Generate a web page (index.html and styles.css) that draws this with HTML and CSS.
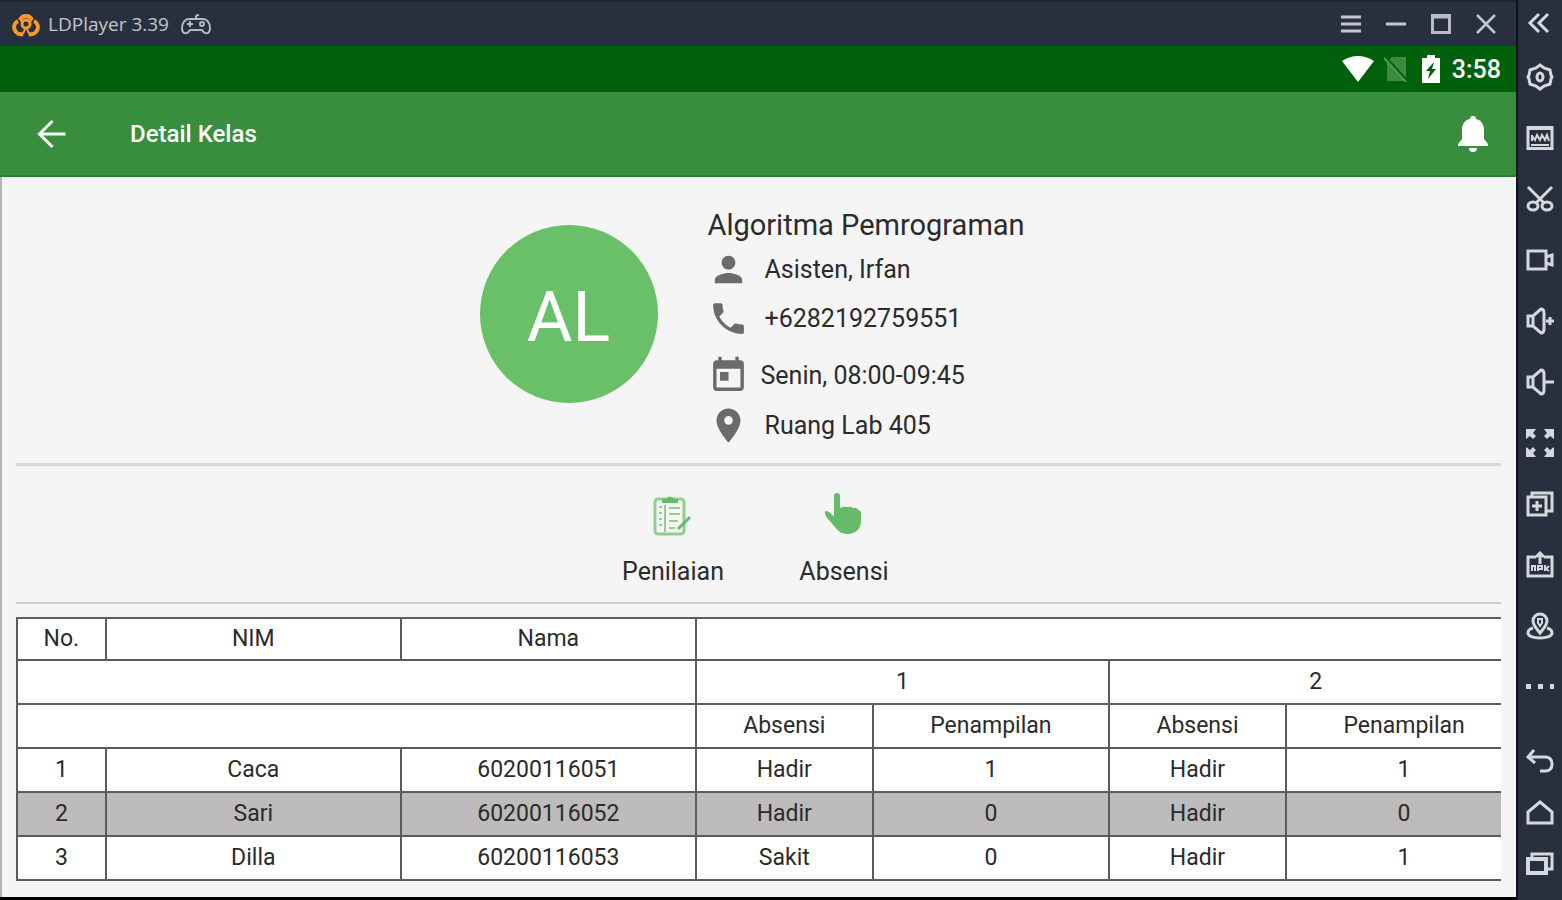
FILE: index.html
```html
<!DOCTYPE html>
<html lang="id">

<head>
    <meta charset="UTF-8">
    <meta name="viewport" content="width=device-width, initial-scale=1.0">
    <title>Detail Kelas</title>
    <link rel="stylesheet" href="styles.css">
</head>

<body>
    <div class="emulator">
        <div class="layar">
            <header class="titlebar">
                <svg class="logo" viewBox="0 0 28 28" fill="none" stroke="#f79a2a" stroke-width="4">
                    <path d="M8 10a6.500 6.500 0 0 1 12 0" />
                    <path d="M6 11a7 7 0 0 0 5 13" />
                    <path d="M22 11a7 7 0 0 1-5 13" />
                    <circle cx="14" cy="14" r="4" stroke-width="3" />
                    <path d="M8 10l3 2M20 10l-3 2M11 24l2-5M17 24l-2-5" stroke-width="2" />
                </svg>
                <span class="nama-app">LDPlayer 3.39</span>
                <svg class="gamepad" viewBox="0 0 30 22" fill="none" stroke="#b4b8c0" stroke-width="2">
                    <path d="M15 6V4q0-2 3-2M8 6h14c4 0 7 4 7 9 0 6-5 7-8 2H9c-3 5-8 4-8-2 0-5 3-9 7-9z" />
                    <path d="M6 11h6M9 8v6" />
                    <circle cx="21" cy="11" r="2" />
                </svg>
                <div class="kontrol">
                    <button type="button" aria-label="Menu">
                        <svg viewBox="0 0 20 20" stroke="#c3c6cc" stroke-width="3"><path d="M0 3h20M0 10h20M0 17h20" /></svg>
                    </button>
                    <button type="button" aria-label="Minimize">
                        <svg viewBox="0 0 20 20" stroke="#c3c6cc" stroke-width="3"><path d="M0 10h20" /></svg>
                    </button>
                    <button type="button" aria-label="Maximize">
                        <svg viewBox="0 0 20 20" fill="none" stroke="#b9bcc3" stroke-width="3"><rect x="1.500" y="1.500" width="17" height="17" /><path d="M2 3h16" /></svg>
                    </button>
                    <button type="button" aria-label="Close">
                        <svg viewBox="0 0 20 20" stroke="#c3c6cc" stroke-width="2.500"><path d="M1 1l18 18M19 1L1 19" /></svg>
                    </button>
                </div>
            </header>

            <main class="android">
                <div class="statusbar">
                    <svg class="wifi" viewBox="0 0 32 26" fill="#fff"><path d="M0 5Q16-5 32 5L16 26z" /></svg>
                    <svg class="sim" viewBox="0 0 24 26">
                        <path fill="#3d8a42" d="M8 1h14v24H3V6z" />
                        <path stroke="#00600b" stroke-width="3" d="M2 2l22 24" />
                        <path stroke="#4f9853" stroke-width="2" d="M0 2l22 24" />
                    </svg>
                    <svg class="baterai" viewBox="0 0 18 28">
                        <path fill="#fff" d="M5 0h8v3h5v25H0V3h5z" />
                        <path fill="#00600b" d="M12 7L4 16h4l-2 8 8-10h-4z" />
                    </svg>
                    <span>3:58</span>
                </div>

                <div class="appbar">
                    <button type="button" aria-label="Kembali">
                        <svg viewBox="0 0 28 28" fill="none" stroke="#fff" stroke-width="3"><path d="M28 14H3M15 1L2 14l13 13" /></svg>
                    </button>
                    <h1>Detail Kelas</h1>
                    <button type="button" class="lonceng" aria-label="Notifikasi">
                        <svg viewBox="0 0 30 36" fill="#fff"><path d="M15 0a3 3 0 0 1 3 3c5 1 8 5 8 11v9l4 5v2H0v-2l4-5v-9C4 8 7 4 12 3a3 3 0 0 1 3-3zM11 32h8a4 4 0 0 1-8 0z" /></svg>
                    </button>
                </div>

                <div class="isi">
                    <section class="detail">
                        <div class="avatar">AL</div>
                        <div class="info">
                            <h2>Algoritma Pemrograman</h2>
                            <p>
                                <svg viewBox="0 0 24 24"><path d="M12 12c2.210 0 4-1.790 4-4s-1.790-4-4-4-4 1.790-4 4 1.790 4 4 4zm0 2c-2.670 0-8 1.340-8 4v2h16v-2c0-2.660-5.330-4-8-4z" /></svg>
                                Asisten, Irfan
                            </p>
                            <p>
                                <svg viewBox="0 0 24 24"><path d="M6.620 10.790c1.440 2.830 3.760 5.140 6.590 6.590l2.200-2.200c.27-.27.67-.36 1.020-.24 1.120.37 2.330.57 3.570.57.55 0 1 .45 1 1V20c0 .55-.45 1-1 1-9.390 0-17-7.610-17-17 0-.55.45-1 1-1h3.500c.55 0 1 .45 1 1 0 1.250.2 2.450.57 3.570.11.35.03.74-.25 1.020l-2.200 2.200z" /></svg>
                                +6282192759551
                            </p>
                            <p class="jadwal">
                                <svg viewBox="0 0 24 24"><path d="M19 3h-1V1h-2v2H8V1H6v2H5c-1.110 0-1.990.9-1.990 2L3 19c0 1.100.89 2 2 2h14c1.100 0 2-.9 2-2V5c0-1.100-.9-2-2-2zm0 16H5V8h14v11zM7 10h5v5H7z" /></svg>
                                Senin, 08:00-09:45
                            </p>
                            <p>
                                <svg viewBox="0 0 24 24"><path d="M12 2C8.130 2 5 5.130 5 9c0 5.250 7 13 7 13s7-7.750 7-13c0-3.870-3.130-7-7-7zm0 9.500c-1.380 0-2.500-1.120-2.500-2.500s1.120-2.500 2.500-2.500 2.500 1.120 2.500 2.500-1.120 2.500-2.500 2.500z" /></svg>
                                Ruang Lab 405
                            </p>
                        </div>
                    </section>

                    <nav class="menu">
                        <a href="#penilaian">
                            <svg viewBox="0 0 44 44" fill="none" stroke="#8fcf90" stroke-width="2">
                                <rect x="4" y="7" width="29" height="35" rx="3" stroke-width="3" />
                                <path fill="#66bb6a" stroke="none" d="M11 11V7h4q4-5 8 0h4v4z" />
                                <path d="M8 15h3M8 21h3M8 27h3M8 33h3M18 16h11M18 22h11M18 29h9M18 36h6M14 13v27" />
                                <path stroke="#66bb6a" stroke-width="3" d="M39 25L27 37" />
                            </svg>
                            Penilaian
                        </a>
                        <a href="#absensi">
                            <svg viewBox="0 0 44 44" fill="#66bb6a"><path d="M12 4a3 3 0 0 1 6 0v12q4-2 7-1 4-1 6 1 4-1 5 2 3 0 3 4v7c0 8-6 13-13 13-6 0-9-2-13-7L5 26c-2-3-3-7-1-7 3 0 5 3 8 5z" /></svg>
                            Absensi
                        </a>
                    </nav>

                    <div class="tabel-scroll">
                        <table>
                            <colgroup>
                                <col class="no">
                                <col class="lebar">
                                <col class="lebar">
                                <col class="absen">
                                <col class="tampil">
                                <col class="absen">
                                <col class="tampil">
                            </colgroup>
                            <thead>
                                <tr>
                                    <th>No.</th>
                                    <th>NIM</th>
                                    <th>Nama</th>
                                    <td colspan="4"></td>
                                </tr>
                                <tr>
                                    <td colspan="3"></td>
                                    <th colspan="2">1</th>
                                    <th colspan="2">2</th>
                                </tr>
                                <tr>
                                    <td colspan="3"></td>
                                    <th>Absensi</th>
                                    <th>Penampilan</th>
                                    <th>Absensi</th>
                                    <th>Penampilan</th>
                                </tr>
                            </thead>
                            <tbody>
                                <tr>
                                    <td>1</td>
                                    <td>Caca</td>
                                    <td>60200116051</td>
                                    <td>Hadir</td>
                                    <td>1</td>
                                    <td>Hadir</td>
                                    <td>1</td>
                                </tr>
                                <tr>
                                    <td>2</td>
                                    <td>Sari</td>
                                    <td>60200116052</td>
                                    <td>Hadir</td>
                                    <td>0</td>
                                    <td>Hadir</td>
                                    <td>0</td>
                                </tr>
                                <tr>
                                    <td>3</td>
                                    <td>Dilla</td>
                                    <td>60200116053</td>
                                    <td>Sakit</td>
                                    <td>0</td>
                                    <td>Hadir</td>
                                    <td>1</td>
                                </tr>
                            </tbody>
                        </table>
                    </div>
                </div>
            </main>
        </div>

        <aside class="sidebar">
            <button type="button" class="lipat" aria-label="Collapse">
                <svg viewBox="0 0 28 28"><path d="M13 5l-9 9 9 9M22 5l-9 9 9 9" /></svg>
            </button>
            <button type="button" aria-label="Settings">
                <svg viewBox="0 0 28 28"><path d="M14 2l4 3 6 2 1 5 1 2-1 2-1 5-6 2-4 3-4-3-6-2-1-5-1-2 1-2 1-5 6-2z" /><ellipse cx="14" cy="14" rx="3" ry="4" /></svg>
            </button>
            <button type="button" aria-label="Keyboard">
                <svg viewBox="0 0 28 28"><path d="M2 3.500h24v21H2z" /><path d="M1 5h26M6 17v-6M6 12l3 4 2-5 3 5 2-5 3 5 2-5 2 6M5 21h18" stroke-width="2" /></svg>
            </button>
            <button type="button" aria-label="Screenshot">
                <svg viewBox="0 0 28 28"><path d="M2 2l16 16M26 2L10 18" /><ellipse cx="7" cy="21" rx="5" ry="4" /><ellipse cx="21" cy="21" rx="5" ry="4" /></svg>
            </button>
            <button type="button" aria-label="Record">
                <svg viewBox="0 0 28 28"><path d="M2 5h18v18H2zM20 11l6-2v10l-6-2" /></svg>
            </button>
            <button type="button" aria-label="Volume up">
                <svg viewBox="0 0 28 28"><path d="M2 9h5l8-7q3 0 3 4v16q0 4-3 4l-8-7H2zM7 9v10M20 14h8M24 10v8" /></svg>
            </button>
            <button type="button" aria-label="Volume down">
                <svg viewBox="0 0 28 28"><path d="M2 9h5l8-7q3 0 3 4v16q0 4-3 4l-8-7H2zM7 9v10M19 14h9" /></svg>
            </button>
            <button type="button" aria-label="Full screen">
                <svg viewBox="0 0 28 28"><path class="padat" d="M0 0h10L7 4l3 3-3 3-3-3-4 3zM28 0H18l3 4-3 3 3 3 3-3 4 3zM0 28h10l-3-4 3-3-3-3-3 3-4-3zM28 28H18l3-4-3-3 3-3 3 3 4-3z" /></svg>
            </button>
            <button type="button" aria-label="Multi instance">
                <svg viewBox="0 0 28 28"><path d="M2 7h18v18H2zM6 7V3h20v18h-6M11 11v10M6 16h10" /></svg>
            </button>
            <button type="button" aria-label="Install APK">
                <svg viewBox="0 0 28 28"><path d="M10 6H2v19h24V6h-8M14 13V2M10 6l4-4 4 4" /><path d="M6 20v-5h3v5M12 20v-5h4v3h-4M19 14v6M23 15l-3 3 3 2" stroke-width="2" /></svg>
            </button>
            <button type="button" aria-label="Location">
                <svg viewBox="0 0 28 28"><path d="M14 21c-4-5-7-8-7-12a7 7 0 0 1 14 0c0 4-3 7-7 12zM7 16c-4 1-5 3-5 5 0 3 5 5 12 5s12-2 12-5c0-2-1-4-5-5" /><path d="M12 7h4v4l-2 3-2-3z" stroke-width="2" /></svg>
            </button>
            <button type="button" aria-label="More">
                <svg viewBox="0 0 28 28"><path class="padat" d="M0 11h5v5H0zM12 11h5v5h-5zM24 11h5v5h-5z" /></svg>
            </button>
            <div class="navigasi">
                <button type="button" aria-label="Back">
                    <svg viewBox="0 0 28 28"><path d="M8 3l-6 7 7 6M2 10h17q7 0 7 7t-7 7h-5" /></svg>
                </button>
                <button type="button" aria-label="Home">
                    <svg viewBox="0 0 28 28"><path d="M14 4L2 14v11h24V14z" /></svg>
                </button>
                <button type="button" aria-label="Recent apps">
                    <svg viewBox="0 0 28 28"><path d="M2 10h18v14H2z" stroke-width="4" /><path d="M6 8V5h20v15h-5" /></svg>
                </button>
            </div>
        </aside>
    </div>
</body>

</html>
```

FILE: styles.css
```css
* {
    box-sizing: border-box;
}

body {
    margin: 0;
    font-family: Roboto, sans-serif;
    color: #2b2b2b;
    background-color: #000;
}

button {
    display: flex;
    align-items: center;
    justify-content: center;
    padding: 0;
    border: 0;
    background: none;
    cursor: pointer;
}

.emulator {
    display: flex;
    min-height: 100vh;
}

.layar {
    display: flex;
    flex-direction: column;
    flex: 1;
    min-width: 0;
    padding-bottom: 3px;
}

/* Barra de la ventana */
.titlebar {
    display: flex;
    align-items: center;
    height: 46px;
    padding: 0 20px 0 12px;
    background-color: #28303f;
    border-top: 2px solid #1e2433;
}

.logo {
    width: 28px;
    height: 28px;
}

.nama-app {
    margin: 0 12px 0 8px;
    font-family: "Open Sans", sans-serif;
    font-size: 19px;
    color: #c3c6cc;
}

.gamepad {
    width: 30px;
    height: 22px;
}

.kontrol {
    display: flex;
    gap: 25px;
    margin-left: auto;
}

.kontrol svg {
    display: block;
    width: 20px;
    height: 20px;
}

.android {
    display: flex;
    flex-direction: column;
    flex: 1;
}

.statusbar {
    display: flex;
    align-items: center;
    justify-content: flex-end;
    height: 46px;
    padding-right: 15px;
    background-color: #00600b;
    color: #fff;
    font-size: 25px;
    font-weight: 500;
}

.wifi {
    width: 32px;
    height: 26px;
}

.sim {
    width: 24px;
    height: 26px;
    margin: 0 14px 0 10px;
}

.baterai {
    width: 18px;
    height: 28px;
    margin-right: 12px;
}

.appbar {
    display: flex;
    align-items: center;
    height: 85px;
    padding: 0 28px 0 37px;
    background-color: #388e3c;
    border-bottom: 2px solid #2c7e31;
}

.appbar svg {
    width: 29px;
    height: 28px;
}

.appbar h1 {
    margin: 0 auto 0 64px;
    font-size: 24px;
    font-weight: 500;
    color: #fff;
}

.appbar .lonceng svg {
    width: 30px;
    height: 36px;
}

.isi {
    flex: 1;
    padding: 0 15px 0 14px;
    background-color: #f5f5f5;
    border-left: 2px solid #b5b5b5;
}

.detail {
    display: flex;
    justify-content: center;
    gap: 50px;
    padding: 30px 0 13px;
    border-bottom: 3px solid #d8d8d8;
}

.avatar {
    display: flex;
    align-items: center;
    justify-content: center;
    width: 178px;
    height: 178px;
    margin-top: 18px;
    padding-top: 6px;
    border-radius: 50%;
    background-color: #6abf69;
    color: #fff;
    font-size: 70px;
}

.info {
    width: 330px;
}

.info h2 {
    margin: 0 0 2px;
    font-size: 29px;
    font-weight: 400;
    line-height: 36px;
    white-space: nowrap;
}

.info p {
    display: flex;
    align-items: center;
    gap: 16px;
    height: 49px;
    margin: 0;
    font-size: 25px;
}

.info svg {
    width: 41px;
    height: 41px;
    fill: #6b6b6b;
}

.info .jadwal {
    height: 58px;
    gap: 12px;
    padding-top: 6px;
}

.menu {
    display: flex;
    justify-content: center;
    padding: 26px 0 16px;
    border-bottom: 2px solid #ccc;
}

.menu a {
    display: flex;
    flex-direction: column;
    align-items: center;
    gap: 22px;
    width: 171px;
    color: #2b2b2b;
    font-size: 25px;
    line-height: 28px;
    text-decoration: none;
}

.menu svg {
    width: 44px;
    height: 44px;
}

/* La tabla es un poco mas ancha que la pantalla */
.tabel-scroll {
    margin: 13px 0 15px;
    overflow: hidden;
}

table {
    width: 101.5%;
    table-layout: fixed;
    border-collapse: collapse;
    background-color: #fff;
    font-size: 23px;
}

.no {
    width: 5.9%;
}

.lebar {
    width: 19.6%;
}

.absen {
    width: 11.75%;
}

.tampil {
    width: 15.7%;
}

th,
td {
    height: 44px;
    padding: 0;
    border: 2px solid #5c5c5c;
    font-weight: 400;
    line-height: 28px;
    text-align: center;
}

thead tr:first-child > * {
    height: 42px;
}

tbody tr:nth-child(even) {
    background-color: #bdbbbc;
}

/* Barra lateral */
.sidebar {
    display: flex;
    flex-direction: column;
    width: 46px;
    padding-bottom: 12px;
    background-color: #28303f;
    border-left: 2px solid #0b1224;
}

.sidebar button {
    height: 61px;
}

.sidebar .lipat {
    height: 46px;
}

.sidebar svg {
    width: 28px;
    height: 28px;
    fill: none;
    stroke: #d5d8dd;
    stroke-width: 3;
}

.sidebar .padat {
    fill: #d5d8dd;
    stroke: none;
}

.navigasi {
    margin-top: auto;
}

.sidebar .navigasi button {
    width: 100%;
    height: 51px;
}
```
